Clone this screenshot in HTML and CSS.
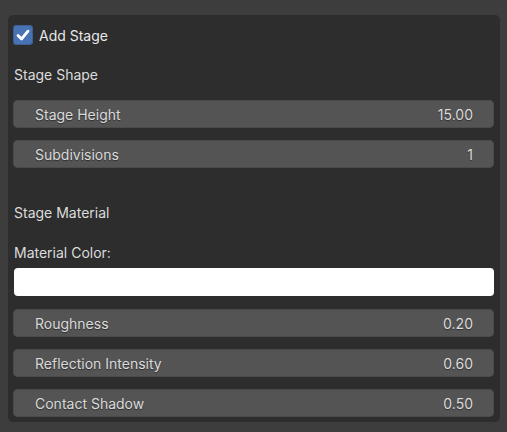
FILE: index.html
```html
<!DOCTYPE html>
<html>
<head>
<meta charset="utf-8">
<link rel="stylesheet" href="styles.css">
</head>
<body>
<div class="panel">
  <div class="check-row">
    <span class="checkbox">
      <svg width="20" height="20" viewBox="0 0 20 20"><path d="M5 10.5 L8.5 14 L15 6.2" fill="none" stroke="#ffffff" stroke-width="2.8" stroke-linecap="round" stroke-linejoin="round"/></svg>
    </span>
    <span class="check-label">Add Stage</span>
  </div>
  <div class="label shape-label">Stage Shape</div>
  <div class="field f-first"><span>Stage Height</span><span>15.00</span></div>
  <div class="field"><span>Subdivisions</span><span>1</span></div>
  <div class="label material-label">Stage Material</div>
  <div class="label color-label">Material Color:</div>
  <div class="swatch"></div>
  <div class="field f-after-swatch"><span>Roughness</span><span>0.20</span></div>
  <div class="field"><span>Reflection Intensity</span><span>0.60</span></div>
  <div class="field"><span>Contact Shadow</span><span>0.50</span></div>
</div>
</body>
</html>
```

FILE: styles.css
```css
html, body {
  margin: 0;
  padding: 0;
  background: #3d3d3d;
  font-family: Inter, "Noto Sans", sans-serif;
  font-size: 14px;
}
.panel {
  margin: 15px 0 0 8px;
  width: 492px;
  height: 407px;
  box-sizing: border-box;
  padding: 10px 6px 5px 5px;
  background: #2d2d2d;
  border-radius: 5px;
  display: flex;
  flex-direction: column;
}
.check-row {
  display: flex;
  align-items: center;
  height: 20px;
}
.checkbox {
  width: 20px;
  height: 20px;
  border-radius: 4px;
  background: #4772b3;
  display: flex;
  box-shadow: inset 0 0 0 1px #3d5f94;
}
.check-label {
  margin-left: 6px;
  color: #e8e8e8;
}
.label {
  height: 20px;
  line-height: 20px;
  padding-left: 1px;
  color: #dcdcdc;
}
.shape-label { margin-top: 20px; }
.material-label { margin-top: 35px; }
.color-label { margin-top: 20px; }
.field {
  height: 28px;
  margin-top: 12px;
  background: #545454;
  border-radius: 5px;
  display: flex;
  align-items: center;
  justify-content: space-between;
  padding: 0 21px 0 22px;
  color: #dadada;
  text-shadow: 0 1px 1px rgba(0,0,0,0.45);
  box-shadow: inset 0 0 0 1px #4a4a4a;
}
.f-first { margin-top: 15px; }
.f-after-swatch { margin-top: 13px; }
.swatch {
  height: 28px;
  margin-top: 5px;
  margin-left: 1px;
  background: #ffffff;
  border-radius: 4px;
}
```
